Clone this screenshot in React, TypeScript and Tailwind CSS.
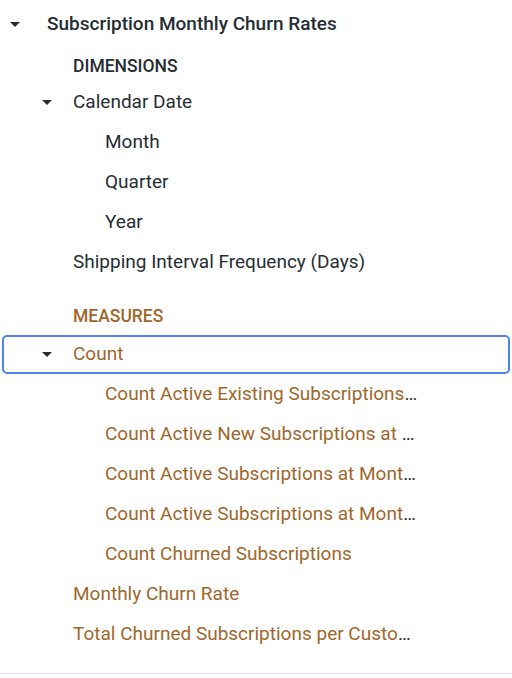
import type { ReactNode } from 'react';

const DARK = 'text-[#262d33]';
const BROWN = 'text-[#a0672c]';

function Caret() {
  return (
    <svg width="10" height="5" viewBox="0 0 10 5" className="shrink-0">
      <path d="M0 0h10L5 5z" fill="#262d33" />
    </svg>
  );
}

// One tree row: caret column + truncated label. The ellipsis inherits the
// dark row colour, the label span carries its own colour.
function Row({
  indent,
  caret = false,
  children,
  className = '',
  labelClass,
}: {
  indent: string;
  caret?: boolean;
  children: ReactNode;
  className?: string;
  labelClass: string;
}) {
  return (
    <div className={`flex h-10 items-center ${className}`}>
      <div className={`flex shrink-0 items-center ${indent}`}>{caret && <Caret />}</div>
      <div className={`min-w-0 flex-1 truncate pr-[92px] ${DARK}`}>
        <span className={labelClass}>{children}</span>
      </div>
    </div>
  );
}

const COUNT_ITEMS = [
  'Count Active Existing Subscriptions at Month Start',
  'Count Active New Subscriptions at Month Start',
  'Count Active Subscriptions at Month End',
  'Count Active Subscriptions at Month Start',
];

export default function App() {
  return (
    <div
      className="h-[678px] w-[512px] overflow-hidden bg-white text-[19px]"
      style={{ fontFamily: 'Roboto, "Liberation Sans", sans-serif' }}
    >
      <div className="border-b border-[#e0e0e0] pb-[19px] pt-[4px]">
        <Row indent="w-[47px] pl-[10px]" caret labelClass={`font-medium ${DARK}`}>
          Subscription Monthly Churn Rates
        </Row>

        <div className={`pb-[4px] pl-[73px] pt-[10px] text-[17.5px] font-medium leading-[24px] ${DARK}`}>
          DIMENSIONS
        </div>
        <Row indent="w-[73px] pl-[42px]" caret labelClass={DARK}>
          Calendar Date
        </Row>
        {['Month', 'Quarter', 'Year'].map((t) => (
          <Row key={t} indent="w-[105px]" labelClass={DARK}>
            {t}
          </Row>
        ))}
        <Row indent="w-[73px]" labelClass={DARK}>
          Shipping Interval Frequency (Days)
        </Row>

        <div className={`pl-[73px] pt-[22px] text-[17.5px] font-medium leading-[24px] ${BROWN}`}>
          MEASURES
        </div>
        <div className="mx-[2px] mt-[7px] rounded-[5px] border-2 border-[#4a84ec]">
          <Row indent="w-[69px] pl-[38px]" caret className="h-[35px]" labelClass={BROWN}>
            Count
          </Row>
        </div>
        {COUNT_ITEMS.map((t) => (
          <Row key={t} indent="w-[105px]" labelClass={BROWN}>
            {t}
          </Row>
        ))}
        <Row indent="w-[105px]" labelClass={BROWN}>
          Count Churned Subscriptions
        </Row>
        <Row indent="w-[73px]" labelClass={BROWN}>
          Monthly Churn Rate
        </Row>
        <Row indent="w-[73px]" labelClass={BROWN}>
          Total Churned Subscriptions per Customer
        </Row>
      </div>
    </div>
  );
}
